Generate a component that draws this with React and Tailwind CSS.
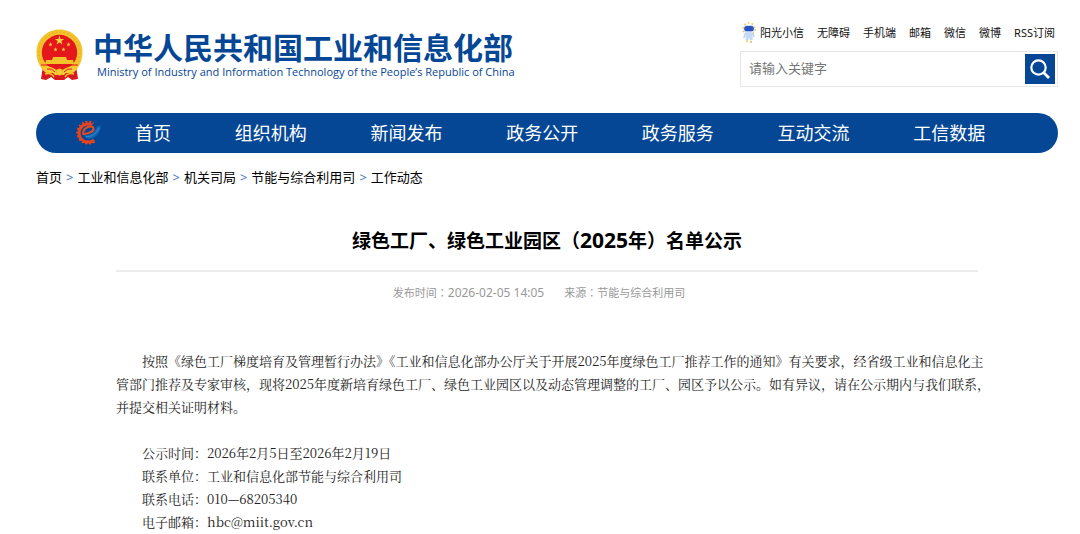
import { useState } from 'react'

const topLinks = ['阳光小信', '无障碍', '手机端', '邮箱', '微信', '微博', 'RSS订阅']
const navItems = ['组织机构', '新闻发布', '政务公开', '政务服务', '互动交流', '工信数据']
const crumbs = ['首页', '工业和信息化部', '机关司局', '节能与综合利用司', '工作动态']

const contacts = [
  { label: '公示时间', value: '2026年2月5日至2026年2月19日' },
  { label: '联系单位', value: '工业和信息化部节能与综合利用司' },
  { label: '联系电话', value: '010—68205340' },
  { label: '电子邮箱', value: 'hbc@miit.gov.cn' },
]

const star = (cx, cy, r) => {
  const pts = []
  for (let i = 0; i < 10; i++) {
    const rad = i % 2 === 0 ? r : r * 0.4
    const a = (Math.PI / 5) * i - Math.PI / 2
    pts.push(`${(cx + rad * Math.cos(a)).toFixed(2)},${(cy + rad * Math.sin(a)).toFixed(2)}`)
  }
  return pts.join(' ')
}

function Emblem() {
  return (
    <svg viewBox="0 0 47 52" className="h-[52px] w-[47px] shrink-0" aria-hidden="true">
      <path d="M7 37 L40 37 L42 50 L36 51 L32 48 L28 51 L19 51 L15 48 L10 51 L5 50 Z" fill="#d8191f" />
      <path d="M23.500 0.500 C36 0.500 46.500 10 46.500 23 C46.500 32 43 39 37 44 L10 44 C4 39 0.500 32 0.500 23 C0.500 10 11 0.500 23.500 0.500 Z" fill="#f3c32c" />
      <circle cx="23.500" cy="23.500" r="20.500" fill="none" stroke="#e3aa22" strokeWidth="1" strokeDasharray="2 2" />
      <circle cx="23.500" cy="23.500" r="17.700" fill="#e4181c" />
      <polygon points={star(23.5, 11.5, 5)} fill="#fbd23c" />
      <polygon points={star(14.5, 15.5, 2.2)} fill="#fbd23c" />
      <polygon points={star(32.5, 15.5, 2.2)} fill="#fbd23c" />
      <polygon points={star(19.5, 20.5, 2.2)} fill="#fbd23c" />
      <polygon points={star(27.5, 20.5, 2.2)} fill="#fbd23c" />
      <path d="M17 28 L30 28 L31 31 L37 31 L38 35 L9 35 L10 31 L16 31 Z" fill="#f3c32c" />
      <path d="M5 36 H42" stroke="#e4181c" strokeWidth="1" />
      <path d="M6 38 Q15 36 20 41 L27 41 Q32 36 41 38 L38 43 Q31 42 28 46 L19 46 Q16 42 9 43 Z" fill="#f6cb35" />
      <path d="M11 40 Q16 39 19 43 M36 40 Q31 39 28 43" stroke="#e4181c" strokeWidth="1" fill="none" />
      <circle cx="23.500" cy="43" r="3.200" fill="#f6cb35" stroke="#e3aa22" strokeWidth="0.600" />
      <path d="M9 45 Q15 43 18 48 M38 45 Q32 43 29 48" stroke="#f3c32c" strokeWidth="1.500" fill="none" />
    </svg>
  )
}

function GearMark() {
  return (
    <svg viewBox="0 0 26 26" className="h-[26px] w-[26px] shrink-0" aria-hidden="true">
      <path d="M19.500 21.500 A10.800 10.800 0 1 1 18.500 3.200" fill="none" stroke="#e8431c" strokeWidth="2.400" strokeDasharray="2 1.750" />
      <path d="M19 19.800 A9 9 0 1 1 17 5" fill="none" stroke="#e8431c" strokeWidth="3" />
      <path d="M8.500 15 C6.500 8 16.500 4 18.500 8 C19.500 11.500 13.500 13.500 9.500 14" fill="none" stroke="#ee4b1d" strokeWidth="2" />
      <path d="M9 15 C14 16.500 20 13 22 6.500 L25.500 5.500 C26 13 19 20 12.500 18.500 C10.500 18 9.500 17 9 15 Z" fill="#1268b5" />
      <path d="M11 16.500 C16 17 21 14 24 8" fill="none" stroke="#3a93d2" strokeWidth="0.800" />
    </svg>
  )
}

function Mascot() {
  return (
    <svg viewBox="0 0 14 21" className="h-[21px] w-[14px] shrink-0" aria-hidden="true">
      <circle cx="7" cy="7" r="6" fill="none" stroke="#f6c445" strokeWidth="1.600" strokeDasharray="1.500 2.270" />
      <rect x="1.500" y="3" width="11" height="8" rx="3.800" fill="#cfe0f8" />
      <rect x="2.200" y="4" width="9.600" height="5.200" rx="2.500" fill="#2c50bd" />
      <path d="M3.800 10.500 H10.200 L10.800 18 H7.800 L7 16 L6.200 18 H3.500 Z" fill="#c7daf4" />
      <path d="M3.500 11 L1.800 16 M10.500 11 L12 15" stroke="#bcd3f2" strokeWidth="1.600" />
      <circle cx="5" cy="19" r="0.900" fill="#f6c445" />
      <circle cx="9" cy="20" r="0.900" fill="#f6a945" />
    </svg>
  )
}

// full-width punctuation that sits in the middle of its square
function Mid({ children }) {
  return (
    <span lang="zh-TW" className="font-['Noto_Sans_CJK_TC',sans-serif]">
      {children}
    </span>
  )
}

function Header() {
  const [keyword, setKeyword] = useState('')

  return (
    <header className="flex items-start justify-between pt-[22px]">
      <a href="#" className="flex items-start pt-[7px] text-[#054795]">
        <Emblem />
        <span className="ml-[10px] flex flex-col pt-[2px]">
          <span className="font-['Liberation_Sans','Noto_Sans_CJK_SC',sans-serif] text-[30px] font-bold leading-9 whitespace-nowrap">
            中华人民共和国工业和信息化部
          </span>
          <span className="ml-1 font-['Open_Sans',sans-serif] text-[11px] leading-[10px] whitespace-nowrap">
            Ministry of Industry and Information Technology of the People’s Republic of China
          </span>
        </span>
      </a>

      <div className="flex flex-col items-end">
        <ul className="flex items-center gap-[13px] pr-[3px] text-[11px] leading-5 text-[#111]">
          {topLinks.map((text, i) => (
            <li key={text}>
              <a href="#" className="flex items-center gap-1 whitespace-nowrap">
                {i === 0 && <Mascot />}
                {text}
              </a>
            </li>
          ))}
        </ul>
        <form
          onSubmit={(e) => e.preventDefault()}
          className="mt-2 flex w-[318px] items-center border border-[#e6e6e6] p-[2px]"
        >
          <input
            type="text"
            aria-label="请输入关键字"
            placeholder="请输入关键字"
            value={keyword}
            onChange={(e) => setKeyword(e.target.value)}
            className="min-w-0 flex-1 px-[6px] text-[13px] outline-none placeholder:text-[#757575]"
          />
          <button type="submit" aria-label="搜索" className="flex h-[30px] w-[30px] items-center justify-center bg-[#054795]">
            <svg viewBox="0 0 20 20" className="h-5 w-5" fill="none" stroke="#fff" strokeWidth="2.200">
              <circle cx="8.500" cy="8.500" r="7.200" />
              <path d="M13.800 13.800 L19 19" strokeWidth="2.800" />
            </svg>
          </button>
        </form>
      </div>
    </header>
  )
}

function App() {
  return (
    <div className="bg-white pl-9 pr-[22px] font-['Noto_Sans','Noto_Sans_CJK_SC',sans-serif] text-black">
      <Header />

      <nav className="mt-[26px] flex h-10 items-center rounded-full bg-[#054795] pl-[39px] pr-[41px] text-[18px] text-white">
        <div className="flex w-32 shrink-0 items-center gap-[34px]">
          <GearMark />
          <a href="#">首页</a>
        </div>
        {navItems.map((item) => (
          <a key={item} href="#" className="flex-1 text-center whitespace-nowrap">
            {item}
          </a>
        ))}
      </nav>

      <ol className="mt-[14px] flex text-[13px] leading-5">
        {crumbs.map((crumb, i) => (
          <li key={crumb}>
            {i > 0 && <span className="mx-1 text-[#3f78bd]">&gt;</span>}
            <a href="#">{crumb}</a>
          </li>
        ))}
      </ol>

      <article className="mt-[39px] px-20">
        <h1 className="border-b-2 border-[#ececec] pb-[15px] text-center text-[19px] font-bold leading-7">
          绿色工厂、绿色工业园区<Mid>（</Mid>
          <span className="text-[21px]">2025</span>年<Mid>）</Mid>名单公示
        </h1>
        <p className="mt-[10px] flex justify-center gap-5 pr-4 text-[11px] leading-5 text-[#999]">
          <span>
            发布时间<Mid>：</Mid>
            <time className="text-[12px]">2026-02-05 14:05</time>
          </span>
          <span>
            来源<Mid>：</Mid>节能与综合利用司
          </span>
        </p>

        <div className="mt-[46px] font-['Noto_Serif_CJK_SC','Noto_Sans_CJK_SC',serif] text-[13px] leading-[23px] text-[#222]">
          <p className="indent-[26px] whitespace-nowrap">
            按照《绿色工厂梯度培育及管理暂行办法》《工业和信息化部办公厅关于开展2025年度绿色工厂推荐工作的通知》有关要求，经省级工业和信息化主
          </p>
          <p className="whitespace-nowrap">
            管部门推荐及专家审核，现将2025年度新培育绿色工厂、绿色工业园区以及动态管理调整的工厂、园区予以公示。如有异议，请在公示期内与我们联系，
          </p>
          <p>并提交相关证明材料。</p>
          <div className="mt-[23px]">
            {contacts.map((c) => (
              <p key={c.label} className="indent-[26px]">
                {c.label}：{c.value}
              </p>
            ))}
          </div>
        </div>
      </article>
    </div>
  )
}

export default App
